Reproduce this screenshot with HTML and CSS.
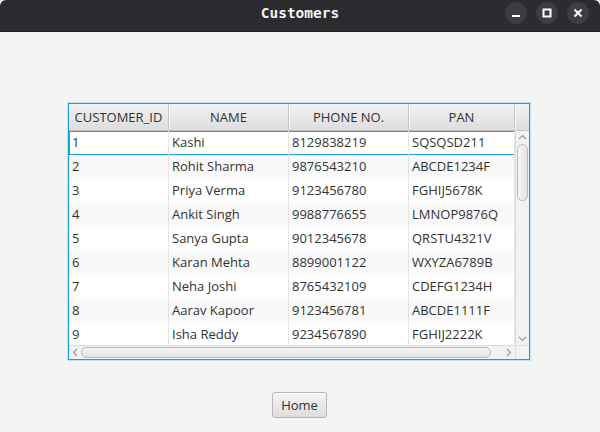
FILE: index.html
```html
<!DOCTYPE html>
<html>
<head>
<meta charset="utf-8">
<link rel="stylesheet" href="styles.css">
</head>
<body>
<div class="window">
  <header class="titlebar">
    <span></span>
    <span class="title">Customers</span>
    <div class="controls">
      <span class="wbtn"><svg width="10" height="10" viewBox="0 0 10 10"><rect x="1" y="7" width="8" height="2" fill="#fff"/></svg></span>
      <span class="wbtn"><svg width="10" height="10" viewBox="0 0 10 10"><rect x="1.5" y="1.5" width="7" height="7" fill="none" stroke="#fff" stroke-width="2"/></svg></span>
      <span class="wbtn"><svg width="10" height="10" viewBox="0 0 10 10"><path d="M1.5 1.5 L8.5 8.5 M8.5 1.5 L1.5 8.5" stroke="#fff" stroke-width="2"/></svg></span>
    </div>
  </header>
  <main class="content">
    <div class="table">
      <div class="thead">
        <div class="th c1">CUSTOMER_ID</div>
        <div class="th c2">NAME</div>
        <div class="th c3">PHONE NO.</div>
        <div class="th c4">PAN</div>
        <div class="th filler"></div>
      </div>
      <div class="tbody">
        <div class="rows">
          <div class="row focused"><div class="td c1">1</div><div class="td c2">Kashi</div><div class="td c3">8129838219</div><div class="td c4">SQSQSD211</div></div>
          <div class="row"><div class="td c1">2</div><div class="td c2">Rohit Sharma</div><div class="td c3">9876543210</div><div class="td c4">ABCDE1234F</div></div>
          <div class="row"><div class="td c1">3</div><div class="td c2">Priya Verma</div><div class="td c3">9123456780</div><div class="td c4">FGHIJ5678K</div></div>
          <div class="row"><div class="td c1">4</div><div class="td c2">Ankit Singh</div><div class="td c3">9988776655</div><div class="td c4">LMNOP9876Q</div></div>
          <div class="row"><div class="td c1">5</div><div class="td c2">Sanya Gupta</div><div class="td c3">9012345678</div><div class="td c4">QRSTU4321V</div></div>
          <div class="row"><div class="td c1">6</div><div class="td c2">Karan Mehta</div><div class="td c3">8899001122</div><div class="td c4">WXYZA6789B</div></div>
          <div class="row"><div class="td c1">7</div><div class="td c2">Neha Joshi</div><div class="td c3">8765432109</div><div class="td c4">CDEFG1234H</div></div>
          <div class="row"><div class="td c1">8</div><div class="td c2">Aarav Kapoor</div><div class="td c3">9123456781</div><div class="td c4">ABCDE1111F</div></div>
          <div class="row"><div class="td c1">9</div><div class="td c2">Isha Reddy</div><div class="td c3">9234567890</div><div class="td c4">FGHIJ2222K</div></div>
        </div>
        <div class="vscroll">
          <div class="arrow"><svg width="9" height="6" viewBox="0 0 9 6"><path d="M1 5 L4.5 1.5 L8 5" fill="none" stroke="#9a9a9a" stroke-width="1.2"/></svg></div>
          <div class="vtrack"><div class="vthumb"></div></div>
          <div class="arrow"><svg width="9" height="6" viewBox="0 0 9 6"><path d="M1 1 L4.5 4.5 L8 1" fill="none" stroke="#9a9a9a" stroke-width="1.2"/></svg></div>
        </div>
      </div>
      <div class="hrow">
        <div class="hscroll">
          <div class="arrow"><svg width="6" height="9" viewBox="0 0 6 9"><path d="M5 1 L1.5 4.5 L5 8" fill="none" stroke="#9a9a9a" stroke-width="1.2"/></svg></div>
          <div class="htrack"><div class="hthumb"></div></div>
          <div class="arrow"><svg width="6" height="9" viewBox="0 0 6 9"><path d="M1 1 L4.5 4.5 L1 8" fill="none" stroke="#9a9a9a" stroke-width="1.2"/></svg></div>
        </div>
        <div class="corner"></div>
      </div>
    </div>
    <button class="home">Home</button>
  </main>
</div>
</body>
</html>
```

FILE: styles.css
```css
* { box-sizing: border-box; }
html, body { margin: 0; padding: 0; background: #ffffff; }
body { width: 600px; height: 432px; overflow: hidden; font-family: "Open Sans", "Noto Sans", sans-serif; font-size: 13px; color: #333; }

.window {
  width: 600px;
  height: 432px;
  display: flex;
  flex-direction: column;
  background: #f4f4f4;
  border-top-left-radius: 6px;
  border-top-right-radius: 6px;
  overflow: hidden;
}

.titlebar {
  height: 32px;
  flex: 0 0 32px;
  background: #2c2b2f;
  display: grid;
  grid-template-columns: 1fr auto 1fr;
  align-items: center;
  border-bottom: 1px solid #1c1b1e;
}
.title {
  font-family: "DejaVu Sans Mono", "Liberation Mono", monospace;
  font-weight: bold;
  font-size: 14.5px;
  color: #f2f2f2;
  padding-bottom: 5px;
}
.controls {
  justify-self: end;
  display: flex;
  gap: 9px;
  padding-right: 11px;
  padding-bottom: 6px;
  align-self: center;
}
.wbtn {
  width: 22px;
  height: 22px;
  border-radius: 50%;
  background: #3e3d42;
  display: flex;
  align-items: center;
  justify-content: center;
}

.content {
  flex: 1;
  display: flex;
  flex-direction: column;
  padding: 70px 0 0 67px;
}

.table {
  width: 464px;
  height: 259px;
  border: 1px solid #bfe3f1;
  box-shadow: inset 0 0 0 1px #1aa0d8;
  padding: 1px;
  display: flex;
  flex-direction: column;
  background: #fff;
}

.thead {
  display: flex;
  height: 27px;
  flex: 0 0 27px;
  background: linear-gradient(#f1f1f1, #dedede);
  border-bottom: 1px solid #c4c4c4;
}
.th {
  display: flex;
  align-items: center;
  justify-content: center;
  border-right: 1px solid #c8c8c8;
  box-shadow: inset 1px 0 0 #f8f8f8;
  padding-bottom: 0;
}
.c1 { width: 100px; flex: 0 0 100px; }
.c2 { width: 120px; flex: 0 0 120px; }
.c3 { width: 120px; flex: 0 0 120px; }
.c4 { width: 106px; flex: 0 0 106px; }
.th.filler { flex: 1; border-right: none; }

.tbody {
  display: flex;
  height: 214px;
  flex: 0 0 214px;
}
.rows {
  width: 446px;
  overflow: hidden;
}
.row {
  display: flex;
  height: 24px;
  background: #fff;
}
.row:nth-child(even) { background: #f9f9f9; }
.row.focused { box-shadow: inset 0 0 0 1px #1aa0d8; }
.td {
  display: flex;
  align-items: center;
  padding-left: 3px;
  padding-bottom: 2px;
  border-right: 1px solid #e4e4e4;
  white-space: nowrap;
}

.vscroll {
  width: 14px;
  flex: 0 0 14px;
  display: flex;
  flex-direction: column;
  background: #f2f2f2;
  border-left: 1px solid #dcdcdc;
}
.vscroll .arrow {
  height: 12px;
  flex: 0 0 12px;
  display: flex;
  align-items: center;
  justify-content: center;
}
.vtrack { flex: 1; padding: 1px 1px 0 1px; }
.vthumb {
  height: 57px;
  border: 1px solid #b9b9b9;
  border-radius: 6px;
  background: linear-gradient(to right, #f6f6f6, #e4e4e4);
}

.hrow {
  display: flex;
  height: 14px;
  flex: 0 0 14px;
}
.hscroll {
  width: 446px;
  display: flex;
  background: #f2f2f2;
  border-top: 1px solid #dcdcdc;
}
.hscroll .arrow {
  width: 12px;
  flex: 0 0 12px;
  display: flex;
  align-items: center;
  justify-content: center;
}
.htrack { flex: 1; padding: 1px 12px 1px 0; }
.hthumb {
  width: 410px;
  height: 100%;
  border: 1px solid #b9b9b9;
  border-radius: 6px;
  background: linear-gradient(#f6f6f6, #e4e4e4);
}
.corner { flex: 1; background: #f2f2f2; border-top: 1px solid #dcdcdc; border-left: 1px solid #dcdcdc; }

.home {
  align-self: flex-start;
  margin-left: 205px;
  margin-top: 31px;
  width: 55px;
  height: 26px;
  font-family: "Open Sans", "Noto Sans", sans-serif;
  font-size: 13px;
  color: #333;
  border: 1px solid #b5b5b5;
  border-radius: 3px;
  background: linear-gradient(#f5f5f5, #dddddd);
  box-shadow: inset 0 1px 0 #fbfbfb;
  padding: 0 0 1px 0;
}
```
